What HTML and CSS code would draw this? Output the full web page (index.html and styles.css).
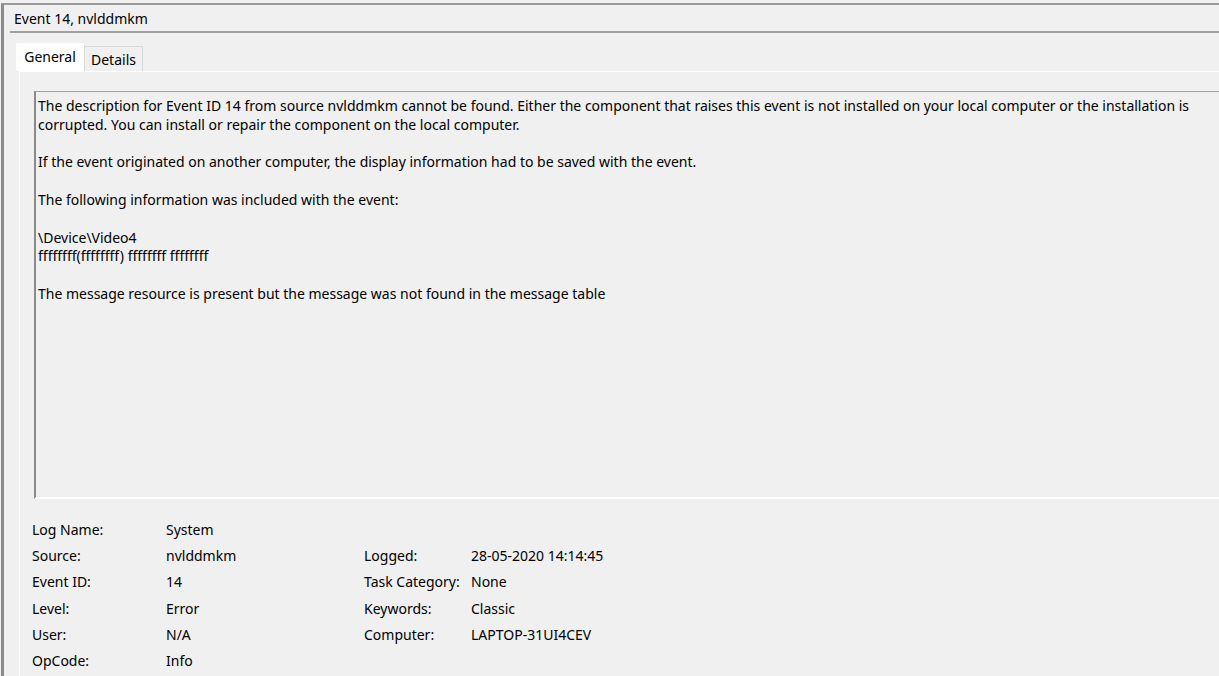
FILE: index.html
```html
<!DOCTYPE html>
<html>
<head>
<meta charset="utf-8">
<link rel="stylesheet" href="styles.css">
</head>
<body>
<div class="window">
  <div class="titlebar">Event 14, nvlddmkm</div>
  <div class="tabs">
    <div class="tab tab-active">General</div>
    <div class="tab">Details</div>
  </div>
  <div class="panel">
    <div class="desc">
      <p>The description for Event ID 14 from source nvlddmkm cannot be found. Either the component that raises this event is not installed on your local computer or the installation is corrupted. You can install or repair the component on the local computer.</p>
      <p>If the event originated on another computer, the display information had to be saved with the event.</p>
      <p>The following information was included with the event:</p>
      <p>\Device\Video4<br>ffffffff(ffffffff) ffffffff ffffffff</p>
      <p>The message resource is present but the message was not found in the message table</p>
    </div>
    <div class="fields">
      <div class="col">
        <div class="row"><span class="label">Log Name:</span><span class="value">System</span></div>
        <div class="row"><span class="label">Source:</span><span class="value">nvlddmkm</span></div>
        <div class="row"><span class="label">Event ID:</span><span class="value">14</span></div>
        <div class="row"><span class="label">Level:</span><span class="value">Error</span></div>
        <div class="row"><span class="label">User:</span><span class="value">N/A</span></div>
        <div class="row"><span class="label">OpCode:</span><span class="value">Info</span></div>
      </div>
      <div class="col col2">
        <div class="row"><span class="label">&nbsp;</span><span class="value"></span></div>
        <div class="row"><span class="label">Logged:</span><span class="value">28-05-2020 14:14:45</span></div>
        <div class="row"><span class="label">Task Category:</span><span class="value">None</span></div>
        <div class="row"><span class="label">Keywords:</span><span class="value">Classic</span></div>
        <div class="row"><span class="label">Computer:</span><span class="value">LAPTOP-31UI4CEV</span></div>
      </div>
    </div>
  </div>
</div>
</body>
</html>
```
FILE: styles.css
```css
html, body {
  margin: 0;
  padding: 0;
  background: #f0f0f0;
  height: 100%;
  overflow: hidden;
}
body {
  font-family: "Noto Sans", "Open Sans", sans-serif;
  font-size: 14px;
  color: #000;
}
.window {
  margin-top: 3px;
  margin-left: 1px;
  border-top: 2px solid #9a9a9a;
  border-left: 3px solid #8c8c8c;
  height: 100%;
  box-sizing: border-box;
}
.titlebar {
  margin-left: 6px;
  padding: 4px 0 0 4px;
  height: 22px;
  border-bottom: 2px solid #a0a0a0;
}
.tabs {
  display: flex;
  align-items: flex-end;
  margin-left: 12px;
  margin-top: 10px;
  height: 28px;
}
.tab {
  height: 25px;
  padding: 0 6px;
  border: 1px solid #d9d9d9;
  border-bottom: none;
  box-sizing: border-box;
  line-height: 25px;
  background: #f0f0f0;
}
.tab-active {
  height: 28px;
  width: 68px;
  padding: 0;
  text-align: center;
  background: #fff;
  border-color: #fff;
  line-height: 26px;
}
.panel {
  margin-left: 15px;
  border-top: 1px solid #fff;
  border-left: 1px solid #fff;
  padding: 19px 0 0 14px;
}
.desc {
  height: 408px;
  border-top: 1px solid #a0a0a0;
  border-left: 2px solid #8a8a8a;
  border-bottom: 2px solid #fff;
  padding: 5px 0 0 2px;
  line-height: 18.8px;
  box-sizing: border-box;
}
.desc p {
  margin: 0 0 18.8px 0;
}
.fields {
  display: flex;
  margin-left: -2px;
  margin-top: 21px;
}
.col {
  display: flex;
  flex-direction: column;
}
.row {
  display: flex;
  height: 26.2px;
  line-height: 20px;
}
.col .label {
  width: 134px;
}
.col .value {
  width: 198px;
}
.col2 .label {
  width: 107px;
}
.col2 .value {
  width: 200px;
}
```
